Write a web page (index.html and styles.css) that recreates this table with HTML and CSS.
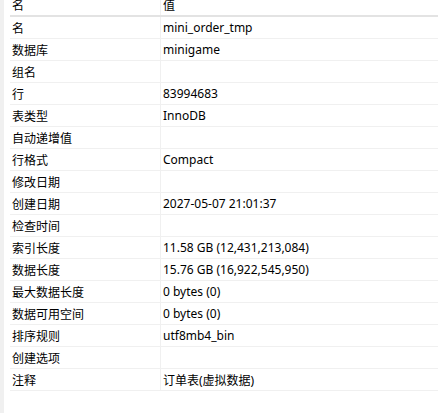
FILE: index.html
```html
<!DOCTYPE html>
<html lang="zh-CN">

<head>
    <meta charset="UTF-8">
    <title>表信息</title>
    <link rel="stylesheet" href="styles.css">
</head>

<body>
    <div class="panel">
        <div class="strip"></div>
        <div class="grid">
            <div class="row head">
                <div class="cell key">名</div>
                <div class="cell val">值</div>
            </div>
            <div class="row"><div class="cell key">名</div><div class="cell val">mini_order_tmp</div></div>
            <div class="row"><div class="cell key">数据库</div><div class="cell val">minigame</div></div>
            <div class="row"><div class="cell key">组名</div><div class="cell val"></div></div>
            <div class="row"><div class="cell key">行</div><div class="cell val">83994683</div></div>
            <div class="row"><div class="cell key">表类型</div><div class="cell val">InnoDB</div></div>
            <div class="row"><div class="cell key">自动递增值</div><div class="cell val"></div></div>
            <div class="row"><div class="cell key">行格式</div><div class="cell val">Compact</div></div>
            <div class="row"><div class="cell key">修改日期</div><div class="cell val"></div></div>
            <div class="row"><div class="cell key">创建日期</div><div class="cell val">2027-05-07 21:01:37</div></div>
            <div class="row"><div class="cell key">检查时间</div><div class="cell val"></div></div>
            <div class="row"><div class="cell key">索引长度</div><div class="cell val">11.58 GB (12,431,213,084)</div></div>
            <div class="row"><div class="cell key">数据长度</div><div class="cell val">15.76 GB (16,922,545,950)</div></div>
            <div class="row"><div class="cell key">最大数据长度</div><div class="cell val">0 bytes (0)</div></div>
            <div class="row"><div class="cell key">数据可用空间</div><div class="cell val">0 bytes (0)</div></div>
            <div class="row"><div class="cell key">排序规则</div><div class="cell val">utf8mb4_bin</div></div>
            <div class="row"><div class="cell key">创建选项</div><div class="cell val"></div></div>
            <div class="row"><div class="cell key">注释</div><div class="cell val">订单表(虚拟数据)</div></div>
        </div>
    </div>
</body>

</html>
```

FILE: styles.css
```css
* {
    box-sizing: border-box;
    margin: 0;
    padding: 0;
}

html,
body {
    height: 100%;
    overflow: hidden;
    background-color: #fff;
}

body {
    font-family: "Noto Sans", "Noto Sans CJK SC", sans-serif;
    font-size: 12px;
    color: #000;
}

.panel {
    display: flex;
    height: 100%;
}

.strip {
    width: 4px;
    flex-shrink: 0;
    background-color: #f0f0f0;
}

.grid {
    flex: 1;
    margin-left: 6px;
    margin-top: -5px;
}

.row {
    display: flex;
    height: 22px;
    border-bottom: 1px solid #f0f0f0;
}

.row.head {
    border-bottom: 2px solid #e3e3e3;
}

.cell {
    display: flex;
    align-items: center;
    white-space: nowrap;
}

.key {
    width: 151px;
    padding-left: 2px;
    border-right: 1px solid #f0f0f0;
}

.val {
    flex: 1;
    padding-left: 2px;
}
```
